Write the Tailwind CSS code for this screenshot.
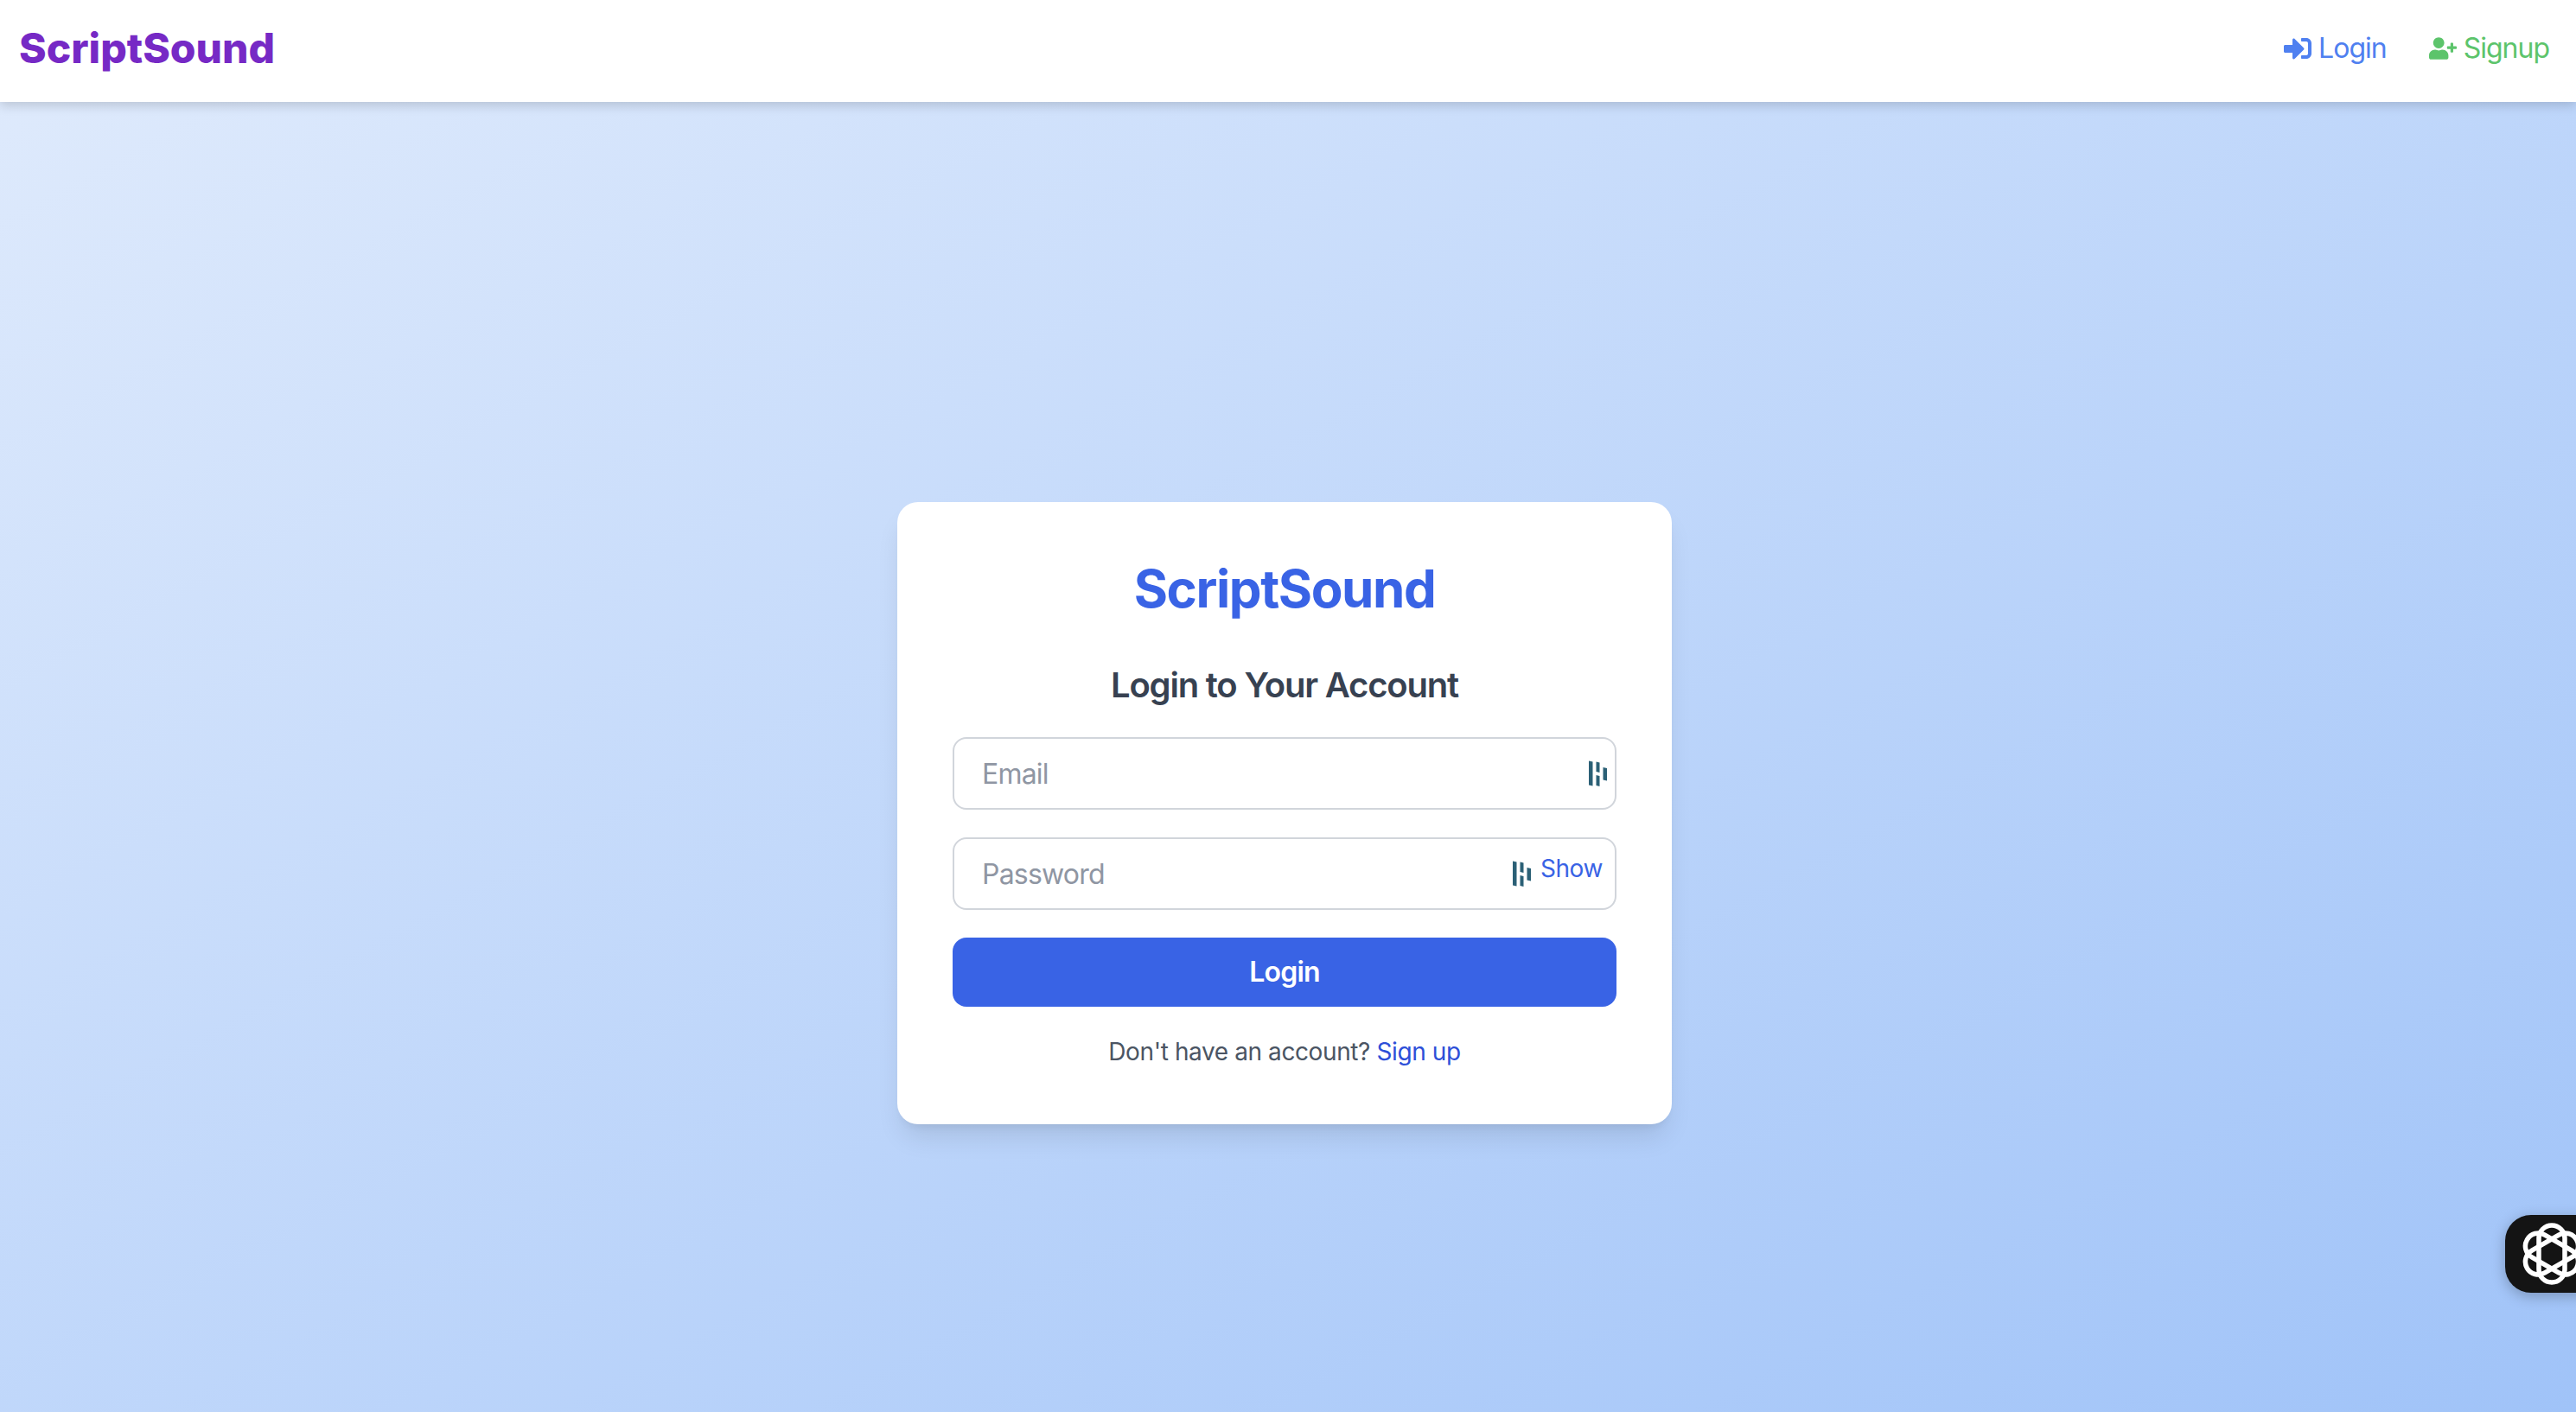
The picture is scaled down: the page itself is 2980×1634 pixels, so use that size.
<!DOCTYPE html>
<html lang="en">
<head>
    <meta charset="UTF-8">
    <meta name="viewport" content="width=device-width, initial-scale=1.0">
    <title>ScriptSound - Login</title>
    <script src="https://cdn.jsdelivr.net/npm/@tailwindcss/browser@4"></script>
</head>
<body class="font-['Inter',sans-serif] bg-linear-to-br from-[#e0ebfc] to-[#a0c3f8] min-h-screen flex flex-col overflow-hidden relative">

    <header class="bg-white h-[118px] flex items-center justify-between pl-[22px] pr-[31px] pb-[6px] shadow-[0_4px_12px_rgb(0_0_0_/_0.16)] relative">
        <a href="#" class="text-[48px] leading-[56px] font-extrabold text-[#7629c5]">ScriptSound</a>
        <nav class="flex items-center gap-[49px] text-[32px] leading-[40px] tracking-[-1px]">
            <a href="#" class="flex items-center gap-[8px] text-[#4f80f0]">
                <svg class="w-[32px] h-[32px]" viewBox="0 0 512 512" fill="currentColor"><path d="M416 448h-84c-6.6 0-12-5.4-12-12v-40c0-6.6 5.4-12 12-12h84c17.7 0 32-14.3 32-32V160c0-17.7-14.3-32-32-32h-84c-6.6 0-12-5.4-12-12V76c0-6.6 5.4-12 12-12h84c53 0 96 43 96 96v192c0 53-43 96-96 96zm-47-201L201 79c-15-15-41-4.5-41 17v96H24c-13.3 0-24 10.7-24 24v96c0 13.3 10.7 24 24 24h136v96c0 21.5 26 32 41 17l168-168c9.3-9.4 9.3-24.6 0-34z"/></svg>
                Login
            </a>
            <a href="#" class="flex items-center gap-[8px] text-[#5cc46b]">
                <svg class="w-[32px] h-[26px]" viewBox="0 0 640 512" fill="currentColor"><path d="M624 208h-64v-64c0-8.8-7.2-16-16-16h-32c-8.8 0-16 7.2-16 16v64h-64c-8.8 0-16 7.2-16 16v32c0 8.8 7.2 16 16 16h64v64c0 8.8 7.2 16 16 16h32c8.8 0 16-7.2 16-16v-64h64c8.8 0 16-7.2 16-16v-32c0-8.8-7.2-16-16-16zm-400 48c70.7 0 128-57.3 128-128S294.7 0 224 0 96 57.3 96 128s57.3 128 128 128zm89.6 32h-16.7c-22.2 10.2-46.9 16-72.9 16s-50.6-5.8-72.9-16h-16.7C60.2 288 0 348.2 0 422.4V464c0 26.5 21.5 48 48 48h352c26.5 0 48-21.5 48-48v-41.6c0-74.2-60.2-134.4-134.4-134.4z"/></svg>
                Signup
            </a>
        </nav>
    </header>

    <main class="flex-1 flex justify-center pt-[463px] pr-[8px]">
        <div class="w-[896px] h-[720px] bg-white rounded-[24px] p-[64px] shadow-[0_20px_30px_-6px_rgb(0_0_0_/_0.1),0_8px_12px_-8px_rgb(0_0_0_/_0.1)]">
            <h1 class="text-[60px] leading-[72px] font-bold tracking-[-1.4px] text-[#3963e5] text-center mb-[48px]">ScriptSound</h1>
            <h2 class="text-[40px] leading-[56px] font-semibold tracking-[-1.2px] text-[#374151] text-center mb-[32px]">Login to Your Account</h2>

            <form class="flex flex-col gap-[32px]">
                <div class="relative">
                    <input type="email" placeholder="Email" class="w-full h-[84px] px-[32px] text-[32px] tracking-[-0.8px] border-2 border-[#d1d5db] rounded-[16px] placeholder:text-[#8f96a3]">
                    <svg class="absolute left-[736px] top-[27px] w-[22px] h-[30px]" viewBox="0 0 22 30" fill="#2b6076"><path d="M0 0.5L4.5 1.5V29.5L0 28.5Z"/><path d="M8.500 1.500L12.500 2.500V14L8.500 13Z"/><path d="M8.500 17L12.500 18V30L8.500 29Z"/><path d="M16.500 8L21 9V23.500L16.500 22.500Z"/></svg>
                </div>
                <div class="relative">
                    <input type="password" placeholder="Password" class="w-full h-[84px] px-[32px] text-[32px] tracking-[-0.8px] border-2 border-[#d1d5db] rounded-[16px] placeholder:text-[#8f96a3]">
                    <svg class="absolute left-[648px] top-[27px] w-[22px] h-[30px]" viewBox="0 0 22 30" fill="#2b6076"><path d="M0 0.5L4.5 1.5V29.5L0 28.5Z"/><path d="M8.500 1.500L12.500 2.500V14L8.500 13Z"/><path d="M8.500 17L12.500 18V30L8.500 29Z"/><path d="M16.500 8L21 9V23.500L16.500 22.500Z"/></svg>
                    <button type="button" class="absolute right-[16px] top-[16px] text-[28px] leading-[40px] tracking-[-0.4px] text-[#3963e5]">Show</button>
                </div>
                <button type="submit" class="w-full h-[80px] rounded-[16px] bg-[#3963e5] text-white text-[32px] font-semibold tracking-[-0.8px]">Login</button>
            </form>

            <p class="mt-[32px] text-[28px] leading-[40px] tracking-[-0.4px] text-[#4b5563] text-center">Don't have an account? <a href="#" class="text-[#2d4fd8]">Sign up</a></p>
        </div>
    </main>

    <!-- floating assistant button -->
    <div class="absolute left-[2898px] top-[1406px] w-[110px] h-[90px] bg-[#141414] rounded-[30px] shadow-[0_4px_16px_rgb(0_0_0_/_0.25)]">
        <svg class="absolute left-[14px] top-[5px] w-[80px] h-[80px]" viewBox="-40 -40 80 80" fill="none" stroke="white" stroke-width="5.500">
            <rect x="-33" y="-15" width="66" height="30" rx="15" transform="rotate(90)"/>
            <rect x="-33" y="-15" width="66" height="30" rx="15" transform="rotate(30)"/>
            <rect x="-33" y="-15" width="66" height="30" rx="15" transform="rotate(150)"/>
        </svg>
    </div>

</body>
</html>
